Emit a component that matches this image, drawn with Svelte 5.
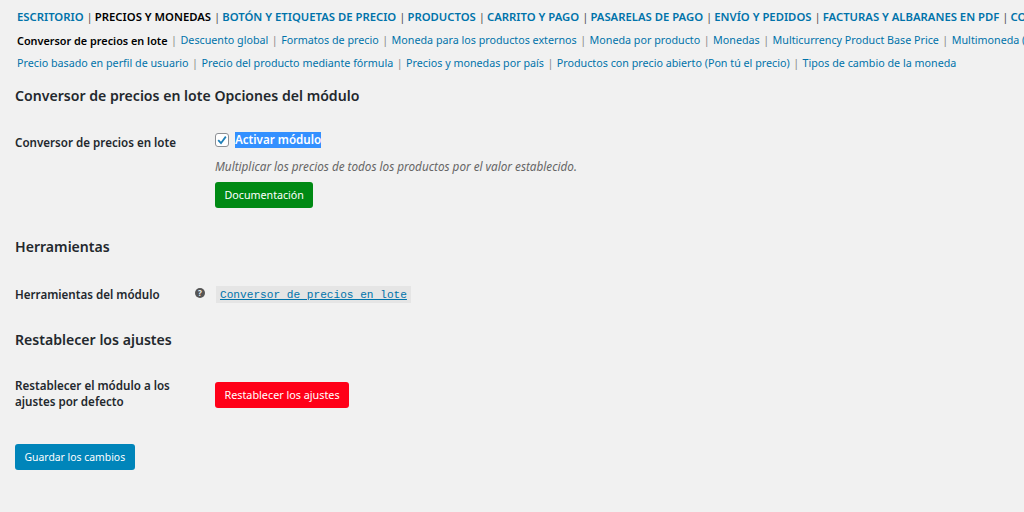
<script>
  const mainTabs = [
    ['ESCRITORIO', false],
    ['PRECIOS Y MONEDAS', true],
    ['BOTÓN Y ETIQUETAS DE PRECIO', false],
    ['PRODUCTOS', false],
    ['CARRITO Y PAGO', false],
    ['PASARELAS DE PAGO', false],
    ['ENVÍO Y PEDIDOS', false],
    ['FACTURAS Y ALBARANES EN PDF', false],
    ['CONTENIDOS', false]
  ];
  const subTabs = [
    ['Conversor de precios en lote', true],
    ['Descuento global', false],
    ['Formatos de precio', false],
    ['Moneda para los productos externos', false],
    ['Moneda por producto', false],
    ['Monedas', false],
    ['Multicurrency Product Base Price', false],
    ['Multimoneda (', false]
  ];
  const subTabs2 = [
    'Precio basado en perfil de usuario',
    'Precio del producto mediante fórmula',
    'Precios y monedas por país',
    'Productos con precio abierto (Pon tú el precio)',
    'Tipos de cambio de la moneda'
  ];
</script>

<div class="page">
  <nav class="main-tabs">
    {#each mainTabs as [label, active], i}
      <a href="#top" class:active>{label}</a>{#if i < mainTabs.length - 1}<span class="sep">|</span>{/if}
    {/each}
  </nav>

  <nav class="sub-tabs first">
    {#each subTabs as [label, active], i}
      <a href="#top" class:active>{label}</a>{#if i < subTabs.length - 1}<span class="sep">|</span>{/if}
    {/each}
  </nav>
  <nav class="sub-tabs second">
    {#each subTabs2 as label, i}
      <a href="#top">{label}</a>{#if i < subTabs2.length - 1}<span class="sep">|</span>{/if}
    {/each}
  </nav>

  <h2 class="title-options">Conversor de precios en lote Opciones del módulo</h2>

  <div class="row row-enable">
    <div class="label">Conversor de precios en lote</div>
    <div class="field">
      <label class="check">
        <span class="box">
          <svg width="12" height="12" viewBox="0 0 12 12"><path d="M2.2 6.2 L5 9.2 L9.8 2.6" fill="none" stroke="#1e7fb8" stroke-width="1.8"/></svg>
        </span>
        <span class="selected">Activar módulo</span>
      </label>
      <p class="desc">Multiplicar los precios de todos los productos por el valor establecido.</p>
      <a href="#top" class="btn green">Documentación</a>
    </div>
  </div>

  <h2 class="title-tools">Herramientas</h2>

  <div class="row row-tools">
    <div class="label">Herramientas del módulo</div>
    <span class="help">?</span>
    <code><a href="#top">Conversor de precios en lote</a></code>
  </div>

  <h2 class="title-reset">Restablecer los ajustes</h2>

  <div class="row row-reset">
    <div class="label">Restablecer el módulo a los ajustes por defecto</div>
    <div class="field">
      <a href="#top" class="btn red">Restablecer los ajustes</a>
    </div>
  </div>

  <a href="#top" class="btn blue">Guardar los cambios</a>
</div>

<style>
  :global(body) {
    margin: 0;
    background: #f1f1f1;
  }

  .page {
    height: 512px;
    overflow: hidden;
    box-sizing: border-box;
    padding: 0 0 0 15px;
    font-family: "Noto Sans", "Open Sans", sans-serif;
    font-size: 11.6px;
    color: #23282d;
  }

  a {
    color: #0073aa;
    text-decoration: none;
  }

  .main-tabs, .sub-tabs {
    white-space: nowrap;
    overflow: hidden;
    margin-left: 2px;
  }

  .main-tabs {
    padding-top: 9px;
    height: 15px;
    line-height: 15px;
    font-size: 11.3px;
    font-weight: 600;
    display: flex;
  }

  .main-tabs .sep {
    margin: 0 2px 0 3px;
    color: #555;
    font-weight: 400;
  }

  .main-tabs a.active, .sub-tabs a.active {
    color: #000;
  }

  .sub-tabs {
    display: flex;
    line-height: 15px;
    font-size: 10.72px;
  }

  .sub-tabs .sep {
    margin: 0 3.5px;
    color: #888;
  }

  .sub-tabs a.active {
    font-weight: 600;
    font-size: 10.85px;
  }

  .sub-tabs.first {
    margin-top: 9px;
  }

  .sub-tabs.second {
    margin-top: 8px;
  }

  h2 {
    margin: 0;
    font-size: 14.1px;
    line-height: 18px;
    font-weight: 600;
    color: #23282d;
  }

  .title-options {
    margin-top: 16px;
  }

  .title-tools {
    margin-top: 30px;
  }

  .title-reset {
    margin-top: 28px;
  }

  .row {
    display: flex;
    align-items: flex-start;
  }

  .label {
    width: 200px;
    font-weight: 600;
    line-height: 16px;
    flex: none;
  }

  .row-enable {
    margin-top: 27px;
  }

  .row-enable .label {
    padding-top: 3px;
  }

  .check {
    display: flex;
    align-items: center;
    gap: 6px;
    height: 16px;
    line-height: 16px;
  }

  .box {
    box-sizing: border-box;
    width: 14px;
    height: 14px;
    border: 1px solid #8c8f94;
    border-radius: 3px;
    background: #fff;
    display: flex;
    align-items: center;
    justify-content: center;
  }

  .selected {
    background: #3390ff;
    color: #fff;
    font-weight: 600;
  }

  .desc {
    margin: 10px 0 8px;
    font-size: 11.72px;
    font-style: italic;
    line-height: 16px;
    color: #666;
  }

  .btn {
    display: inline-block;
    box-sizing: border-box;
    height: 26px;
    line-height: 26px;
    padding: 0 9.5px;
    border-radius: 3px;
    color: #fff;
    font-size: 10.7px;
  }

  .green {
    background: #008a14;
  }

  .red {
    background: #ff0018;
    margin-top: 5px;
    font-size: 10.8px;
  }

  .blue {
    background: #0085ba;
    margin-top: 34px;
    font-size: 10.4px;
  }

  .row-tools {
    margin-top: 30px;
    position: relative;
  }

  .row-tools .label {
    width: 180px;
    padding-top: 1px;
  }

  .help {
    width: 10px;
    height: 10px;
    margin-top: 2px;
    border-radius: 50%;
    background: #555;
    color: #f1f1f1;
    font-size: 8px;
    font-weight: 700;
    line-height: 10px;
    text-align: center;
    flex: none;
  }

  code {
    margin-left: 11px;
    background: #e5e5e5;
    padding: 1px 4px 0;
    height: 16px;
    line-height: 16px;
    font-family: "Liberation Mono", "DejaVu Sans Mono", monospace;
    font-size: 11.13px;
  }

  code a {
    color: #0073aa;
    text-decoration: underline;
  }

  .row-reset {
    margin-top: 28px;
  }

  .row-reset .label {
    width: 160px;
    margin-right: 40px;
    padding-top: 1px;
    line-height: 16px;
  }
</style>
